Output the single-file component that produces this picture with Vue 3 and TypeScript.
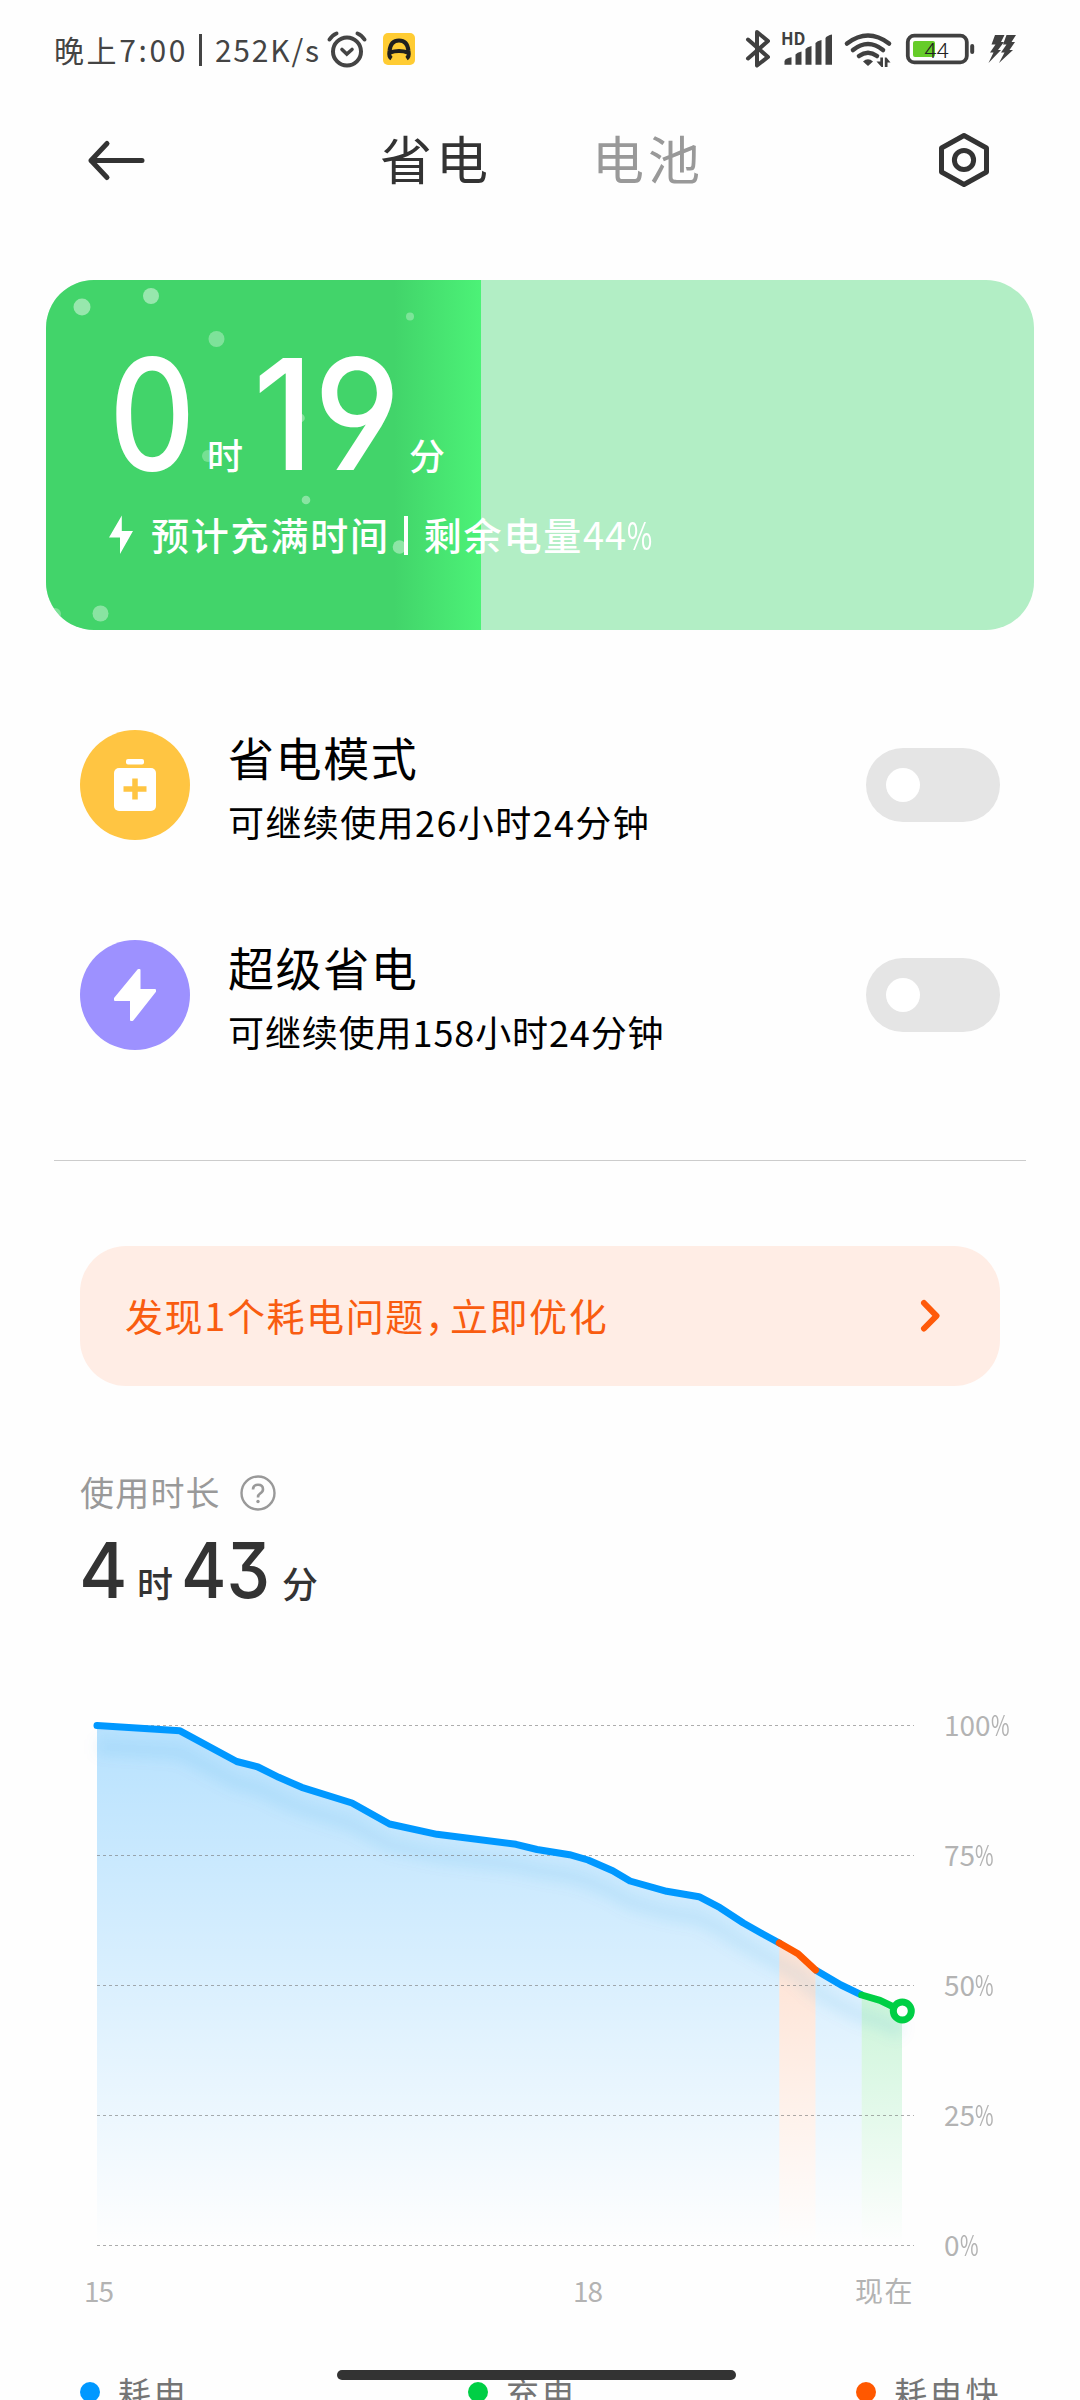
<script setup lang="ts">
interface Bubble { x: number; y: number; r: number; o: number }
interface Point { x: number; y: number }
interface Mode { id: string; title: string; detail: string }

const batteryLevel = 44

const bubbles: Bubble[] = [
  { x: 36, y: 27, r: 8.5, o: 0.45 },
  { x: 105, y: 16, r: 8, o: 0.45 },
  { x: 170.5, y: 59, r: 8, o: 0.32 },
  { x: 364, y: 36.5, r: 4, o: 0.3 },
  { x: 254.5, y: 138, r: 4.3, o: 0.35 },
  { x: 162, y: 176, r: 6, o: 0.28 },
  { x: 260, y: 220, r: 4.3, o: 0.38 },
  { x: 353.5, y: 267, r: 6.8, o: 0.4 },
  { x: 54.5, y: 333.5, r: 8, o: 0.38 },
  { x: 9, y: 334, r: 6, o: 0.3 },
]

const modes: Mode[] = [
  { id: 'saver', title: '省电模式', detail: '可继续使用26小时24分钟' },
  { id: 'ultra', title: '超级省电', detail: '可继续使用158小时24分钟' },
]

const normalA: Point[] = [
  { x: 97, y: 1726.5 }, { x: 180, y: 1731.8 }, { x: 236.7, y: 1762.5 }, { x: 258, y: 1768 },
  { x: 278.7, y: 1778.3 }, { x: 301.7, y: 1788.3 }, { x: 352, y: 1804 }, { x: 389.5, y: 1825 },
  { x: 437, y: 1835.3 }, { x: 516, y: 1845.3 }, { x: 537, y: 1850.5 }, { x: 569.6, y: 1855.7 },
  { x: 588, y: 1861 }, { x: 612.7, y: 1871.7 }, { x: 630, y: 1882 }, { x: 666.7, y: 1892.3 },
  { x: 699, y: 1897.7 }, { x: 720, y: 1908.7 }, { x: 743.3, y: 1924 }, { x: 762.3, y: 1934.7 },
  { x: 779.3, y: 1944 },
]
const fast: Point[] = [{ x: 779.3, y: 1944 }, { x: 798, y: 1954.7 }, { x: 815.5, y: 1971 }]
const normalB: Point[] = [{ x: 815.5, y: 1971 }, { x: 841, y: 1986 }, { x: 861.7, y: 1996 }]
const charging: Point[] = [{ x: 861.7, y: 1996 }, { x: 880, y: 2001.3 }, { x: 902, y: 2012 }]

const toLine = (pts: Point[]): string => pts.map(p => `${p.x},${p.y}`).join(' ')
const toArea = (pts: Point[]): string =>
  `${pts[0].x},2246 ${toLine(pts)} ${pts[pts.length - 1].x},2246`

const allPoints = [...normalA, ...fast, ...normalB, ...charging]
const gridRows = [1726.5, 1856.5, 1986.5, 2116.5, 2246.5]
const percents = [100, 75, 50, 25, 0]
</script>

<template>
  <div class="screen">
    <header class="status">
      <span class="status-text"><span class="clock">晚上7:00</span><i class="bar"></i>252K/s</span>
      <svg class="alarm" width="42" height="38" viewBox="0 0 42 38" fill="none" stroke="#444" stroke-linecap="round">
        <circle cx="21" cy="21.500" r="14" stroke-width="4" />
        <path d="M3.500 9.500Q6.500 5 10.500 3.500M38.500 9.500Q35.500 5 31.500 3.500" stroke-width="4" />
        <path d="M16 19.500L20.800 24L26 19.500" stroke-width="3.600" />
      </svg>
      <svg class="app-badge" width="32" height="32" viewBox="0 0 32 32">
        <rect width="32" height="32" rx="5" fill="#ffcc33" />
        <path d="M8.500 25.500Q5.500 23.500 6.500 18Q7.500 7.500 16 7.500Q24.500 7.500 25.500 18Q26.500 23.500 23.500 25.500M7 19.500Q16 16.500 25 19.500" fill="none" stroke="#1f1f1f" stroke-width="4" />
      </svg>
      <span class="grow"></span>
      <svg width="272" height="62" viewBox="744 18 272 62" fill="none" stroke="#404040">
        <path d="M748 39.500L768 57L757 65.500V32L768 41L748 58.500" stroke-width="4" stroke-linejoin="round" stroke-linecap="round" />
        <text x="781" y="45" font-size="16.500" font-weight="700" fill="#404040" stroke="none" textLength="24.500" lengthAdjust="spacingAndGlyphs">HD</text>
        <g fill="#404040" stroke="none">
          <path d="M784.500 64.700V61Q786 58 791.500 57.300V64.700Z" />
          <path d="M795.500 64.700V54.500Q797 52.500 801.500 51.500V64.700Z" />
          <path d="M805.500 64.700V49Q807 47 811.500 46V64.700Z" />
          <path d="M815.500 64.700V43Q817 41 821.500 40V64.700Z" />
          <path d="M825.500 64.700V38Q827 35.500 832 34.500V64.700Z" />
        </g>
        <path d="M847 43.500Q868 27.500 889 43.500M853 50Q868 38 883 50M859 56Q868 49.500 877 56" stroke-width="4.600" stroke-linecap="round" />
        <path d="M863 61.500Q868 57 873 61.500L868 66Z" fill="#404040" stroke="none" />
        <path d="M880.300 57.500H883V67H881.500L876.500 61.500H880.300ZM884.800 67V57.500H886.500L890.500 62.500H887.500V67Z" fill="#404040" stroke="#fefefe" stroke-width="2.400" paint-order="stroke" />
        <rect x="907.800" y="35.600" width="59" height="26.800" rx="6.500" stroke-width="3.800" />
        <path d="M972.200 46V52" stroke-width="4" stroke-linecap="round" />
        <rect x="913" y="41" width="22" height="16" rx="2" fill="#66cc29" stroke="none" />
        <text x="924.500" y="58" font-size="21.500" font-weight="300" fill="#222" stroke="none" textLength="24.500" lengthAdjust="spacingAndGlyphs">44</text>
        <g fill="#404040" stroke="none">
          <path d="M995 35H1004.500L1001 42H1004L998 50H1001L988.500 63L993.500 52.500H990L995.500 44.500H991.500Z" />
          <path d="M1006.500 35H1016L1011.500 42H1015L1009.500 50H1013L999 63L1004.500 52.500H1001L1006.500 44.500H1003Z" />
        </g>
      </svg>
    </header>

    <nav class="nav">
      <svg class="back" width="60" height="44" viewBox="0 0 60 44" fill="none" stroke="#333" stroke-width="5" stroke-linecap="round" stroke-linejoin="round">
        <path d="M56 22.500H5M21 5.500L5 22.500L21 39.500" />
      </svg>
      <span class="tab active">省电</span>
      <span class="tab">电池</span>
      <span class="grow"></span>
      <svg class="gear" width="54" height="58" viewBox="0 0 54 58" fill="none" stroke="#333" stroke-width="5" stroke-linejoin="round">
        <path d="M27 4.500L49.500 17V41L27 53.500L4.500 41V17Z" />
        <circle cx="27" cy="29" r="9.600" />
      </svg>
    </nav>

    <section class="hero">
      <div class="level" :style="{ width: batteryLevel + '%' }">
        <svg width="435" height="350" viewBox="0 0 435 350" fill="#fff">
          <circle v-for="(b, i) in bubbles" :key="i" :cx="b.x" :cy="b.y" :r="b.r" :opacity="b.o" />
        </svg>
      </div>
      <div class="hero-body">
        <div class="hero-time">
          <span class="num n0">0</span><span class="unit">时</span>
          <span class="num n19">19</span><span class="unit">分</span>
        </div>
        <div class="hero-note">
          <svg width="24" height="40" viewBox="0 0 24 40"><path d="M12.800 0.500L0 22.500H11V39L24 16H12.800Z" fill="#fff" /></svg>
          <span>预计充满时间</span><i></i><span>剩余电量<b class="level-value">{{ batteryLevel }}</b><b class="pct">%</b></span>
        </div>
      </div>
    </section>

    <section class="modes">
      <div v-for="m in modes" :key="m.id" class="mode">
        <span class="disc" :class="m.id">
          <svg v-if="m.id === 'saver'" width="42" height="52" viewBox="0 0 42 52">
            <rect x="12" y="0" width="18" height="5.500" rx="2" fill="#fff" />
            <rect x="0" y="9" width="42" height="43" rx="5" fill="#fff" />
            <path d="M9.500 30H32.500M21 19.500V40.500" stroke="#ffc542" stroke-width="5.500" />
          </svg>
          <svg v-else width="42" height="52" viewBox="0 0 42 52">
            <path d="M24.500 1L1 29.500V31H17V51H18.500L41 22.500V21H25.500V1Z" fill="#fff" stroke="#fff" stroke-width="2" stroke-linejoin="round" />
          </svg>
        </span>
        <span class="mode-text" :class="m.id">
          <b>{{ m.title }}</b>
          <small>{{ m.detail }}</small>
        </span>
        <span class="switch"><i></i></span>
      </div>
    </section>

    <hr class="rule" />

    <section class="banner">
      <span>发现1个耗电问题<em>，</em>立即优化</span>
      <svg width="20" height="34" viewBox="0 0 20 34" fill="none" stroke="#ff5a0a" stroke-width="6" stroke-linecap="round" stroke-linejoin="round">
        <path d="M4 4L16.500 16.800L4 29.500" />
      </svg>
    </section>

    <section class="usage">
      <div class="usage-label">
        <span>使用时长</span>
        <svg width="36" height="36" viewBox="0 0 36 36">
          <circle cx="18" cy="18" r="16.500" fill="none" stroke="#999" stroke-width="2.400" />
          <path d="M13 14.500Q13 9.800 18 9.800Q23 9.800 23 14.300Q23 17 20 18.600Q18 19.800 18 22.500" fill="none" stroke="#999" stroke-width="2.600" />
          <circle cx="18" cy="26.500" r="1.700" fill="#999" />
        </svg>
      </div>
      <div class="usage-time">
        <span class="num u4">4</span><span class="unit">时</span>
        <span class="num u43">43</span><span class="unit">分</span>
      </div>
    </section>

    <section class="chart">
      <div class="plot-row">
        <svg width="850" height="580" viewBox="80 1700 850 580">
          <defs>
            <linearGradient id="gBlue" gradientUnits="userSpaceOnUse" x1="0" y1="1726" x2="0" y2="2246">
              <stop offset="0" stop-color="#0098ff" stop-opacity=".28" /><stop offset="1" stop-color="#0098ff" stop-opacity="0" />
            </linearGradient>
            <linearGradient id="gOrange" gradientUnits="userSpaceOnUse" x1="0" y1="1944" x2="0" y2="2246">
              <stop offset="0" stop-color="#ff5800" stop-opacity=".17" /><stop offset="1" stop-color="#ff5800" stop-opacity="0" />
            </linearGradient>
            <linearGradient id="gGreen" gradientUnits="userSpaceOnUse" x1="0" y1="1996" x2="0" y2="2246">
              <stop offset="0" stop-color="#00cf45" stop-opacity=".2" /><stop offset="1" stop-color="#00cf45" stop-opacity="0" />
            </linearGradient>
            <filter id="soft" filterUnits="userSpaceOnUse" x="80" y="1700" width="850" height="400"><feGaussianBlur stdDeviation="7" /></filter>
          </defs>
          <polygon :points="toArea(normalA)" fill="url(#gBlue)" />
          <polygon :points="toArea(fast)" fill="url(#gOrange)" />
          <polygon :points="toArea(normalB)" fill="url(#gBlue)" />
          <polygon :points="toArea(charging)" fill="url(#gGreen)" />
          <polyline :points="toLine(allPoints)" transform="translate(0 21)" fill="none" stroke="#0090d8" stroke-opacity=".09" stroke-width="15" filter="url(#soft)" />
          <line v-for="y in gridRows" :key="y" x1="97" x2="914" :y1="y" :y2="y" stroke="#777" stroke-opacity=".6" stroke-dasharray="3 3" />
          <g fill="none" stroke-width="7" stroke-linejoin="round">
            <polyline :points="toLine(normalA)" stroke="#0098ff" stroke-linecap="round" />
            <polyline :points="toLine(normalB)" stroke="#0098ff" />
            <polyline :points="toLine(fast)" stroke="#ff5800" stroke-linecap="round" />
            <polyline :points="toLine(charging)" stroke="#00cf45" stroke-linecap="round" />
          </g>
          <circle cx="902.300" cy="2012" r="9" fill="#fff" stroke="#00cf45" stroke-width="7" />
        </svg>
        <div class="percents"><span v-for="p in percents" :key="p">{{ p }}<b class="pct">%</b></span></div>
      </div>
      <div class="hours"><span>15</span><span>18</span><span class="now">现在</span></div>
    </section>

    <footer class="legend">
      <span class="key blue"><i></i>耗电</span>
      <span class="key green"><i></i>充电</span>
      <span class="key orange"><i></i>耗电快</span>
    </footer>
    <div class="home-bar"></div>
  </div>
</template>

<style>
html, body { margin: 0; background: #fefefe; }
</style>

<style scoped>
.screen {
  position: relative;
  box-sizing: border-box;
  width: 1080px;
  height: 2400px;
  overflow: hidden;
  background: #fefefe;
  font-family: "Noto Sans CJK SC", sans-serif;
  color: #333;
}
.screen svg { display: block; flex: none; }
.screen span { white-space: nowrap; }
.grow { flex: 1; }
.pct { display: inline-block; font-weight: inherit; letter-spacing: 0; transform: scaleX(.72); transform-origin: 0 50%; }

.status { display: flex; align-items: center; height: 98px; padding: 0 64px 0 54px; }
.status-text { width: 272px; font-size: 30px; letter-spacing: 1.8px; line-height: 40px; padding-bottom: 1px; color: #444; display: flex; align-items: center; }
.clock { letter-spacing: 2.6px; }
.status-text .bar { width: 3px; height: 32px; background: #444; margin: 2px 13px 0 11px; }
.app-badge { margin-left: 15px; }

.nav { display: flex; align-items: center; height: 124px; padding: 0 89px 0 86px; }
.tab { font-size: 52px; line-height: 60px; letter-spacing: 4px; color: #999; width: 212px; padding-bottom: 4px; }
.tab.active { margin-left: 234px; color: #333; }

.hero { position: relative; height: 350px; margin: 58px 46px 0; border-radius: 48px; overflow: hidden; background: #b2eec5; color: #fff; }
.level { position: absolute; left: 0; top: 0; bottom: 0; overflow: hidden; background: linear-gradient(90deg, #42d46a 80%, #4cf277); }
.hero-body { position: relative; padding: 55px 0 0 63px; }
.hero-time { display: flex; align-items: baseline; height: 158px; line-height: 158px; }
.num { font-family: Inter, sans-serif; font-weight: 500; font-feature-settings: "cv04", "cv09"; transform-origin: 0 50%; display: block; }
.n0 { width: 98px; font-size: 154px; transform: scaleX(.87); }
.n19 { width: 156px; margin-left: 10px; font-size: 154px; transform: scaleX(.95); }
.unit { font-size: 36px; font-weight: 500; width: 36px; display: block; }
.hero-note { display: flex; align-items: center; height: 60px; margin-top: 12px; font-size: 38px; letter-spacing: 1.8px; font-weight: 500; }
.hero-note span { padding-bottom: 3px; }
.hero-note svg { margin-right: 18px; }
.hero-note i { width: 4px; height: 39px; background: #fff; margin: 0 16px 0 14px; }
.level-value { font-weight: 400; letter-spacing: .8px; }
.hero-note .pct { font-weight: 400; }

.modes { padding-top: 50px; }
.mode { display: flex; align-items: center; height: 210px; padding: 0 80px; }
.disc { width: 110px; height: 110px; border-radius: 50%; display: flex; align-items: center; justify-content: center; }
.disc.saver { background: #ffc542; }
.disc.ultra { background: #9d91ff; }
.mode-text { flex: 1; margin-left: 38px; padding-top: 2px; display: flex; flex-direction: column; color: #000; }
.mode-text b { font-size: 46px; font-weight: 400; line-height: 60px; letter-spacing: 1.6px; }
.mode-text small { font-size: 36px; line-height: 50px; letter-spacing: .9px; margin-top: 10px; }
.mode-text.saver small { letter-spacing: 1.4px; }
.switch { width: 134px; height: 74px; border-radius: 37px; background: #e5e5e5; display: flex; align-items: center; }
.switch i { width: 34px; height: 34px; border-radius: 50%; background: #fff; margin-left: 20px; }

.rule { height: 1px; border: 0; margin: 60px 54px 0; background: #ccc; }

.banner { display: flex; align-items: center; justify-content: space-between; height: 140px; box-sizing: border-box; margin: 85px 80px 0; padding: 0 60px 0 45px; border-radius: 46px; background: #ffede5; color: #f95c10; font-size: 38px; letter-spacing: 1.6px; }
.banner span { padding-bottom: 4px; }
.banner em { font-style: normal; letter-spacing: -13px; }

.usage { padding: 82px 80px 0; }
.usage-label { display: flex; align-items: center; height: 50px; font-size: 34px; letter-spacing: 1.2px; color: #999; }
.usage-label span { padding-bottom: 4px; }
.usage-label svg { margin-left: 19px; }
.usage-time { display: flex; align-items: baseline; height: 100px; line-height: 100px; margin-top: 2px; }
.u4 { width: 58px; margin-left: -1px; font-size: 77px; transform: scaleX(.96); }
.u43 { width: 101px; margin-left: 8px; font-size: 77px; transform: scaleX(.9); }

.chart { margin-top: 79px; padding-left: 80px; color: #b3b3b3; font-size: 28px; }
.plot-row { display: flex; height: 580px; }
.percents { display: flex; flex-direction: column; margin-left: 14px; }
.percents span { flex: none; height: 130px; line-height: 50px; }
.hours { display: flex; line-height: 40px; padding-left: 4px; margin-top: -9px; letter-spacing: -1px; }
.hours span { width: 489px; }
.hours .now { width: auto; letter-spacing: 1.5px; margin-left: -207px; }

.legend { display: flex; justify-content: space-between; padding: 0 79px 0 80px; margin-top: 52px; height: 60px; }
.key { display: flex; align-items: center; height: 60px; font-size: 33px; letter-spacing: 2.6px; color: #757575; }
.key i { width: 20px; height: 20px; border-radius: 50%; margin-right: 18px; }
.blue i { background: #0098ff; }
.green i { background: #00cf45; }
.orange i { background: #ff5800; }

.home-bar { position: absolute; left: 337px; top: 2370px; width: 399px; height: 10px; border-radius: 5px; background: #333; }
</style>
